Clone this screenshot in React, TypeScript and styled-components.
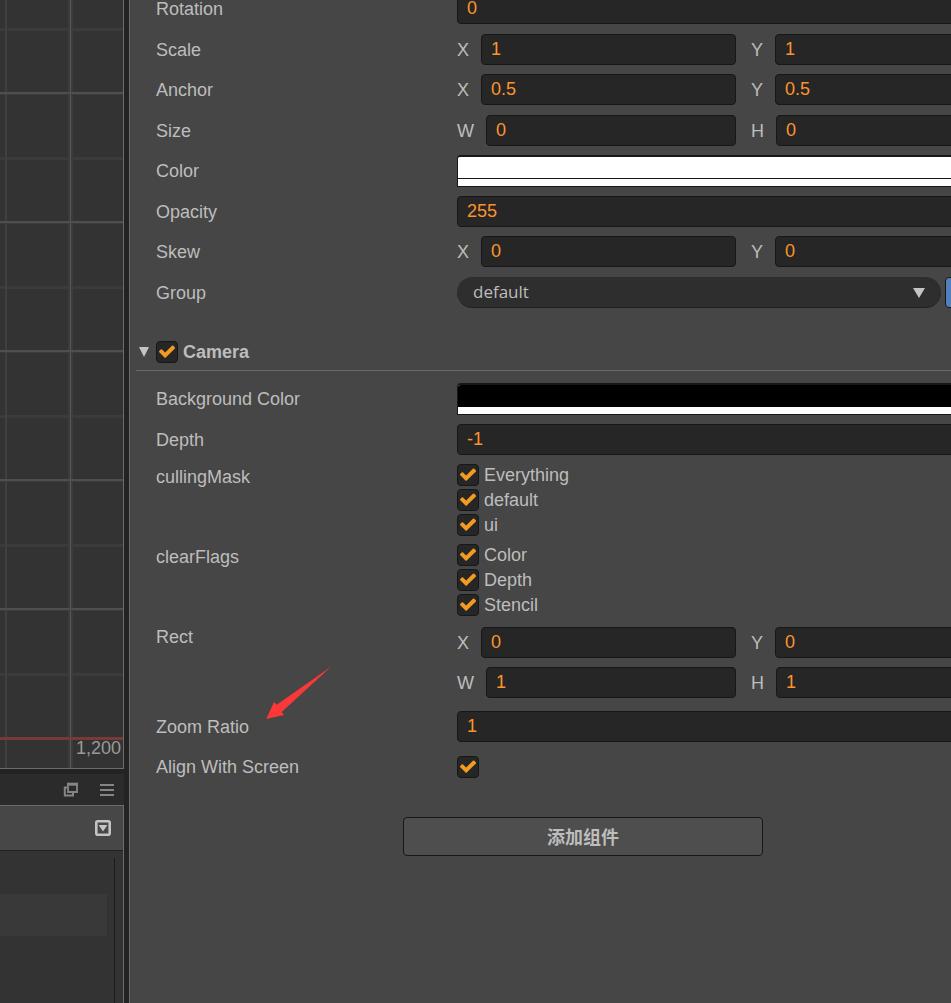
import React, { useId, useState } from "react";
import styled, { createGlobalStyle } from "styled-components";

const GlobalStyle = createGlobalStyle`
  * { box-sizing: border-box; }
  body {
    margin: 0;
    overflow: hidden;
    background: #232323;
    color: #bdbdbd;
    font: 18px/26px "Liberation Sans", Arial, "Noto Sans CJK SC", sans-serif;
  }
  input, select, button { font: inherit; color: inherit; margin: 0; }
`;

const Workspace = styled.div`
  display: flex;
  gap: 5px;
  height: 100vh;
  overflow: hidden;
`;

/* ---------- left side: scene view and docked panel ---------- */

const Sidebar = styled.div`
  display: flex;
  flex: none;
  flex-direction: column;
  gap: 5px;
  width: 124px;
`;

const Scene = styled.section`
  position: relative;
  flex: 1;
  overflow: hidden;
  background: #333;
  border: solid #6c6c6c;
  border-width: 0 1px 1px 0;
`;

const SceneGrid = styled.svg`
  display: block;
`;

const RulerMark = styled.span`
  position: absolute;
  right: 2px;
  bottom: 7px;
  color: #999;
`;

const Dock = styled.section`
  display: flex;
  flex: none;
  flex-direction: column;
  height: 229px;
`;

const DockTabs = styled.header`
  display: flex;
  flex: none;
  align-items: center;
  justify-content: flex-end;
  gap: 20px;
  height: 31px;
  padding-right: 9px;
  background: #2b2b2b;
`;

const IconButton = styled.button`
  display: flex;
  padding: 0;
  border: 0;
  background: none;
`;

const DockBody = styled.div`
  display: flex;
  flex: 1;
  flex-direction: column;
  background: #333;
  border: solid #6c6c6c;
  border-width: 1px 1px 0 0;
`;

const DockToolbar = styled.div`
  display: flex;
  flex: none;
  align-items: center;
  justify-content: flex-end;
  height: 45px;
  padding-right: 12px;
  background: #474747;
  border-bottom: 1px solid #202020;
`;

const DockList = styled.div`
  flex: 1;
  margin: 7px 8px 0 0;
  padding: 36px 7px 0 0;
  border-right: 1px solid #1b1b1b;
`;

const DockRow = styled.div`
  height: 42px;
  background: #393939;
`;

/* ---------- right side: inspector ---------- */

const Inspector = styled.main`
  flex: 1;
  min-width: 0;
  overflow: hidden;
  background: #464646;
  border-left: 1px solid #6c6c6c;
`;

/* The property sheet is wider than the visible pane and is scrolled down a little. */
const Sheet = styled.form`
  position: relative;
  margin: -7px -85px 0 6px;
  padding-right: 6px;
`;

const Properties = styled.div`
  padding-left: 20px;
`;

const Row = styled.div<{ $gap?: number; $top?: boolean }>`
  display: grid;
  grid-template-columns: 301px 1fr;
  align-items: ${(p) => (p.$top ? "start" : "center")};
  min-height: 31px;
  margin-top: ${(p) => p.$gap ?? 9}px;
`;

const Name = styled.label``;

const TextInput = styled.input`
  flex: 1;
  width: 100%;
  min-width: 0;
  height: 31px;
  padding: 0 9px;
  background: #262626;
  border: 1px solid #171717;
  border-radius: 4px;
  color: #fd942b;
  outline: none;
`;

const VectorRows = styled.div<{ $inset?: boolean }>`
  display: grid;
  grid-template-columns: 1fr 1fr;
  gap: 9px 15px;
  padding-top: ${(p) => (p.$inset ? 3 : 0)}px;
`;

const Axis = styled.label`
  display: flex;
  align-items: center;
  gap: 12px;
`;

const ColorBox = styled.div<{ $line: string }>`
  display: flex;
  flex-direction: column;
  height: 32px;
  overflow: hidden;
  background: #fff;
  border: 1px solid #171717;
  border-top-width: 2px;
  border-radius: 4px 4px 0 0;

  input {
    appearance: none;
    display: block;
    width: 100%;
    height: 22px;
    padding: 0;
    border: 0;
    border-bottom: 1px solid ${(p) => p.$line};
    background: none;
  }
  input::-webkit-color-swatch-wrapper { padding: 0; }
  input::-webkit-color-swatch { border: 0; border-radius: 0; }
`;

const GroupField = styled.div`
  display: flex;
  gap: 4px;
`;

const SelectBox = styled.div`
  position: relative;
  width: 484px;

  select {
    appearance: none;
    display: block;
    width: 100%;
    height: 31px;
    padding: 0 16px;
    border: 0;
    border-bottom: 1px solid #202020;
    border-radius: 16px;
    background: #2e2e2e;
    font-family: "Open Sans", "Noto Sans", sans-serif;
    font-size: 17px;
  }
  svg {
    position: absolute;
    top: 11px;
    right: 16px;
    pointer-events: none;
  }
`;

const EditButton = styled.button`
  flex: 1;
  height: 31px;
  background: #5180bd;
  border: 1px solid #171717;
  border-radius: 4px;
`;

const CheckList = styled.div`
  display: flex;
  flex-direction: column;
  gap: 3px;
`;

const CheckLabel = styled.label`
  display: flex;
  align-items: center;
  gap: 5px;
  height: 22px;
`;

const CheckBox = styled.span`
  position: relative;
  display: block;
  width: 22px;
  height: 22px;

  input {
    appearance: none;
    display: block;
    width: 22px;
    height: 22px;
    background: #262626;
    border: 1px solid #171717;
    border-radius: 4px;
  }
  svg {
    position: absolute;
    top: 4px;
    left: 3px;
    pointer-events: none;
  }
`;

const SectionHeader = styled.header`
  display: flex;
  align-items: center;
  gap: 5px;
  height: 38px;
  margin: 25px 0 12px;
  padding-left: 2px;
  border-bottom: 1px solid #6a6a6a;
  font-weight: bold;
`;

const FoldButton = styled.button`
  display: flex;
  width: 13px;
  padding: 0 0 0 1px;
  border: 0;
  background: none;
`;

const AddButton = styled.button`
  display: block;
  width: 360px;
  height: 39px;
  margin: 35px auto 0;
  padding: 2px 0 0;
  background: #4e4e4e;
  border: 1px solid #171717;
  border-radius: 4px;
  font-weight: bold;
`;

const Pointer = styled.svg`
  position: absolute;
  top: 673px;
  left: 129px;
`;

/* ---------- parts ---------- */

function Check({ id, label }: { id?: string; label?: string }) {
  const [on, setOn] = useState(true);
  const box = (
    <CheckBox>
      <input id={id} type="checkbox" checked={on} onChange={() => setOn(!on)} />
      {on && (
        <svg width="16" height="13" viewBox="121 302 1550 1220" aria-hidden="true">
          <path
            d="M1671 566q0 40-28 68l-724 724-136 136q-28 28-68 28t-68-28l-136-136-362-362q-28-28-28-68t28-68l136-136q28-28 68-28t68 28l294 295 656-657q28-28 68-28t68 28l136 136q28 28 28 68z"
            fill="#f29b20"
          />
        </svg>
      )}
    </CheckBox>
  );
  return label ? <CheckLabel>{box}{label}</CheckLabel> : box;
}

function Down({ width = 12 }: { width?: number }) {
  return (
    <svg width={width} height="10" viewBox="0 0 12 10" preserveAspectRatio="none" aria-hidden="true">
      <path d="M0 0h12L6 10Z" fill="#c4c4c4" />
    </svg>
  );
}

function TextRow({ name, value, gap }: { name: string; value: string; gap?: number }) {
  const id = useId();
  return (
    <Row $gap={gap}>
      <Name htmlFor={id}>{name}</Name>
      <TextInput id={id} defaultValue={value} />
    </Row>
  );
}

type AxisValue = [axis: string, value: string];

function VectorRow({ name, axes, gap, stacked }: { name: string; axes: AxisValue[]; gap?: number; stacked?: boolean }) {
  const id = useId();
  return (
    <Row role="group" aria-labelledby={id} $gap={gap} $top={stacked}>
      <Name as="span" id={id}>{name}</Name>
      <VectorRows $inset={stacked}>
        {axes.map(([axis, value]) => (
          <Axis key={axis}>
            {axis}
            <TextInput defaultValue={value} />
          </Axis>
        ))}
      </VectorRows>
    </Row>
  );
}

function ColorRow({ name, value, line, gap }: { name: string; value: string; line: string; gap?: number }) {
  const id = useId();
  return (
    <Row $gap={gap}>
      <Name htmlFor={id}>{name}</Name>
      <ColorBox $line={line}>
        <input id={id} type="color" defaultValue={value} />
      </ColorBox>
    </Row>
  );
}

function MaskRow({ name, items, gap }: { name: string; items: string[]; gap?: number }) {
  const id = useId();
  return (
    <Row role="group" aria-labelledby={id} $gap={gap} $top>
      <Name as="span" id={id}>{name}</Name>
      <CheckList>
        {items.map((item) => <Check key={item} label={item} />)}
      </CheckList>
    </Row>
  );
}

function SceneView() {
  const major = [93, 222, 351, 480, 609];
  const minor = [29, 158, 287, 416, 545, 674];
  return (
    <Scene>
      <SceneGrid width="123" height="768" aria-hidden="true">
        <g fill="#3b3b3b">
          <rect x="68" width="5" height="768" />
          {minor.map((y) => <rect key={y} y={y - 1} width="123" height="3" />)}
          {major.map((y) => <rect key={y} y={y - 1} width="123" height="3" />)}
        </g>
        <rect x="5" width="2" height="768" fill="#404040" />
        <rect x="70" width="1" height="768" fill="#585858" />
        <g fill="#4f4f4f">
          {major.map((y) => <rect key={y} y={y - 1} width="123" height="2" />)}
        </g>
        <rect y="737" width="123" height="3" fill="#773a37" />
      </SceneGrid>
      <RulerMark>1,200</RulerMark>
    </Scene>
  );
}

export default function App() {
  return (
    <>
      <GlobalStyle />
      <Workspace>
        <Sidebar>
          <SceneView />
          <Dock>
            <DockTabs>
              <IconButton type="button" aria-label="Pop out">
                <svg width="16" height="16" viewBox="0 0 16 16" fill="none" stroke="#858585">
                  <path d="M5 2v8h9V2" strokeWidth="1.8" />
                  <path d="M4 2.2h11" strokeWidth="3" />
                  <path d="M4 5.5H1.8v8H10V11" strokeWidth="2" />
                </svg>
              </IconButton>
              <IconButton type="button" aria-label="Menu">
                <svg width="16" height="16" viewBox="0 0 16 16" fill="#858585">
                  <path d="M1 2h14v2H1zM1 7h14v2H1zM1 12h14v2H1z" />
                </svg>
              </IconButton>
            </DockTabs>
            <DockBody>
              <DockToolbar>
                <IconButton type="button" aria-label="Collapse all">
                  <svg width="16" height="16" viewBox="0 0 16 16">
                    <rect x="1.3" y="1.3" width="13.4" height="13.4" rx="1.5" fill="none" stroke="#c4c4c4" strokeWidth="2.6" />
                    <path d="M3.6 5h8.8L8 11.5Z" fill="#c4c4c4" />
                  </svg>
                </IconButton>
              </DockToolbar>
              <DockList>
                <DockRow />
              </DockList>
            </DockBody>
          </Dock>
        </Sidebar>

        <Inspector>
          <Sheet>
            <Properties>
              <TextRow name="Rotation" value="0" gap={0} />
              <VectorRow name="Scale" axes={[["X", "1"], ["Y", "1"]]} gap={10} />
              <VectorRow name="Anchor" axes={[["X", "0.5"], ["Y", "0.5"]]} />
              <VectorRow name="Size" axes={[["W", "0"], ["H", "0"]]} gap={10} />
              <ColorRow name="Color" value="#ffffff" line="#171717" />
              <TextRow name="Opacity" value="255" />
              <VectorRow name="Skew" axes={[["X", "0"], ["Y", "0"]]} />
              <Row $gap={10}>
                <Name htmlFor="group">Group</Name>
                <GroupField>
                  <SelectBox>
                    <select id="group" defaultValue="default">
                      <option>default</option>
                    </select>
                    <Down />
                  </SelectBox>
                  <EditButton type="button" aria-label="Edit groups" />
                </GroupField>
              </Row>
            </Properties>

            <SectionHeader>
              <FoldButton type="button" aria-label="Fold Camera">
                <Down width={10} />
              </FoldButton>
              <Check label="Camera" />
            </SectionHeader>

            <Properties>
              <ColorRow name="Background Color" value="#000000" line="#000" gap={0} />
              <TextRow name="Depth" value="-1" />
              <MaskRow name="cullingMask" items={["Everything", "default", "ui"]} />
              <MaskRow name="clearFlags" items={["Color", "Depth", "Stencil"]} gap={8} />
              <VectorRow name="Rect" axes={[["X", "0"], ["Y", "0"], ["W", "1"], ["H", "1"]]} gap={8} stacked />
              <TextRow name="Zoom Ratio" value="1" gap={13} />
              <Row>
                <Name htmlFor="align">Align With Screen</Name>
                <Check id="align" />
              </Row>
            </Properties>

            <AddButton type="button">添加组件</AddButton>

            <Pointer width="68" height="54" viewBox="0 0 68 54" aria-hidden="true">
              <path d="M1.3 53 9 36l2.7 2.7L66 .7 16.7 46 19 49Z" fill="#fb3838" />
            </Pointer>
          </Sheet>
        </Inspector>
      </Workspace>
    </>
  );
}
